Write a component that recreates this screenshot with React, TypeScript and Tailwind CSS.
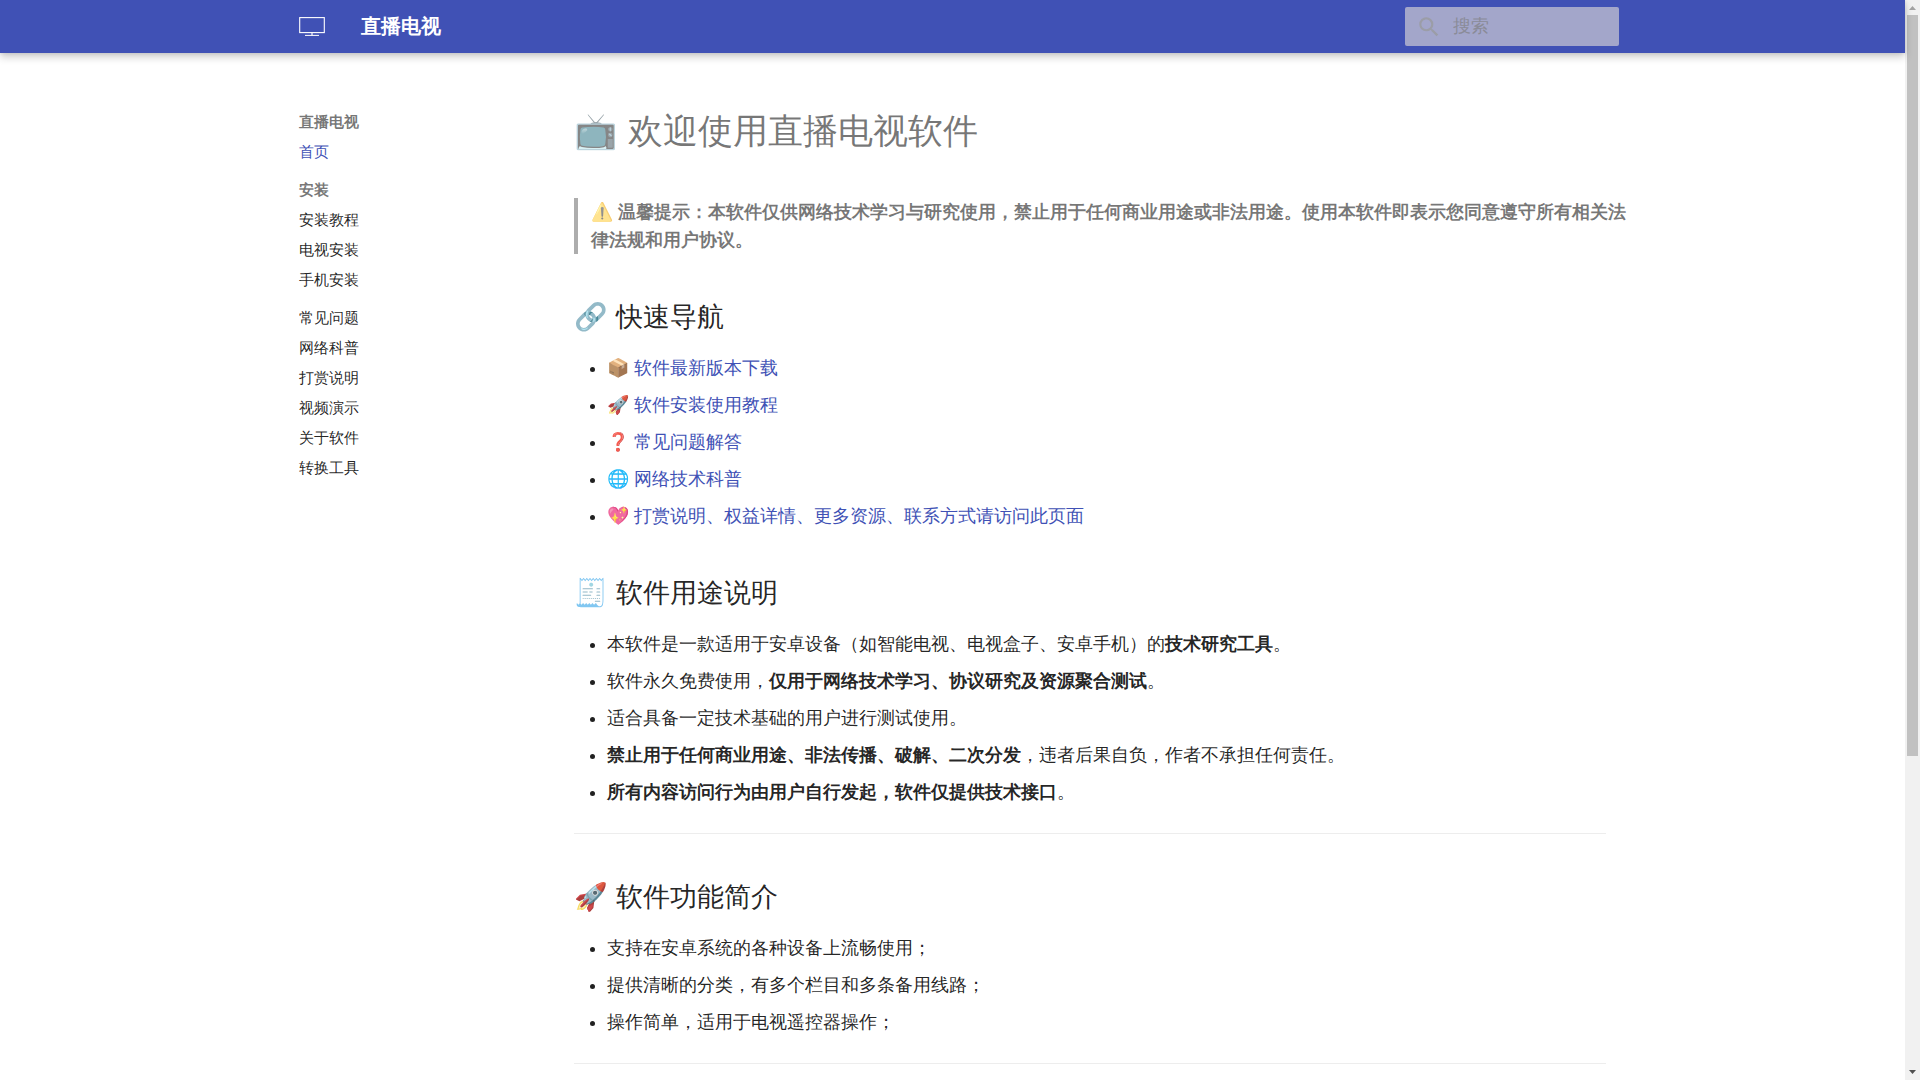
import type { ReactNode } from "react";

const navGroups = [
  {
    title: "直播电视",
    links: [{ label: "首页", active: true }],
  },
  {
    title: "安装",
    links: [{ label: "安装教程" }, { label: "电视安装" }, { label: "手机安装" }],
  },
  {
    links: [
      { label: "常见问题" },
      { label: "网络科普" },
      { label: "打赏说明" },
      { label: "视频演示" },
      { label: "关于软件" },
      { label: "转换工具" },
    ],
  },
] as { title?: string; links: { label: string; active?: boolean }[] }[];

const quickLinks = [
  { icon: "📦", label: "软件最新版本下载" },
  { icon: "🚀", label: "软件安装使用教程" },
  { icon: "❓", label: "常见问题解答" },
  { icon: "🌐", label: "网络技术科普" },
  { icon: "💖", label: "打赏说明、权益详情、更多资源、联系方式请访问此页面" },
];

function Header() {
  return (
    <header className="sticky top-0 z-10 bg-[#4051b5] text-white shadow-[0_0_4px_#0000001a,0_4px_8px_#00000033]">
      <div className="mx-auto flex h-[53px] max-w-[1343px] items-center pl-[18px] pr-[5px]">
        <a href="#" aria-label="直播电视">
          <svg viewBox="0 0 26 26" className="size-[26px]" fill="none" stroke="currentColor">
            <rect x="0.7" y="3.6" width="24.6" height="15" strokeWidth="1.1" />
            <path d="M13 19v2.2" strokeWidth="1.2" />
            <path d="M6 21.4h14" strokeWidth="1" />
          </svg>
        </a>
        <span className="ml-9 pb-0.5 text-[20px] font-bold leading-[28px]">直播电视</span>
        <form className="ml-auto flex h-[39px] w-[214px] items-center rounded-xs bg-[#a3a6ca] pl-[11px]">
          <label htmlFor="search">
            <svg viewBox="0 0 24 24" className="size-[26px]" fill="#9b9da7">
              <path d="M9.5 3A6.5 6.5 0 0 1 16 9.5c0 1.61-.59 3.09-1.56 4.23l.27.27h.79l5 5-1.5 1.5-5-5v-.79l-.27-.27A6.516 6.516 0 0 1 9.5 16 6.5 6.5 0 0 1 3 9.5 6.5 6.5 0 0 1 9.5 3m0 2C7 5 5 7 5 9.5S7 14 9.5 14 14 12 14 9.5 12 5 9.5 5Z" />
            </svg>
          </label>
          <input
            id="search"
            type="text"
            placeholder="搜索"
            aria-label="搜索"
            className="ml-[11px] w-full min-w-0 bg-transparent text-[18px] text-[#000000de] outline-none placeholder:text-[#8a8b98]"
          />
        </form>
      </div>
    </header>
  );
}

function SideNav() {
  return (
    <nav className="flex w-[266px] shrink-0 flex-col gap-[18px] pl-[18px] pt-[59px] text-[15px] leading-[20px]">
      {navGroups.map((group, i) => (
        <div key={i}>
          {group.title && <p className="mb-[10px] font-bold text-[#0000008a]">{group.title}</p>}
          <ul className="flex flex-col gap-[10px]">
            {group.links.map((link) => (
              <li key={link.label}>
                <a href="#" className={link.active ? "text-[#4051b5]" : ""}>
                  {link.label}
                </a>
              </li>
            ))}
          </ul>
        </div>
      ))}
    </nav>
  );
}

function Heading({ children }: { children: ReactNode }) {
  return <h2 className="mb-[18px] mt-[44px] text-[27px] font-light leading-[38px]">{children}</h2>;
}

function List({ children }: { children: ReactNode }) {
  return <ul className="ml-[33px] flex list-disc flex-col gap-[9px]">{children}</ul>;
}

function ScrollBar() {
  return (
    <div className="sticky top-0 flex h-screen w-[15px] shrink-0 flex-col items-center bg-[#f1f1f1]">
      <svg viewBox="0 0 15 15" className="size-[15px] shrink-0" fill="#a3a3a3">
        <path d="M4 10h7L7.500 6z" />
      </svg>
      <div className="h-[741px] w-[11px] bg-[#c1c1c1]" />
      <svg viewBox="0 0 15 15" className="mt-auto size-[15px] shrink-0" fill="#505050">
        <path d="M4 5h7L7.500 9z" />
      </svg>
    </div>
  );
}

function App() {
  return (
    <div
      lang="zh"
      className="flex min-h-screen bg-white font-['Liberation_Sans',sans-serif] text-[#000000de]"
    >
      <div className="min-w-0 flex-1">
        <Header />
        <div className="mx-auto flex max-w-[1343px]">
          <SideNav />
          <main className="ml-[27px] mr-[18px] min-w-0 flex-1 pt-[55px] text-[18px] leading-[28px]">
            <h1 className="mb-[44px] text-[35px] font-light leading-[46px] text-[#0000008a]">
              📺 欢迎使用直播电视软件
            </h1>
            <blockquote className="-mr-6 border-l-4 border-[#00000052] pl-[13px] text-[#0000008a]">
              <strong>
                ⚠️ 温馨提示：本软件仅供网络技术学习与研究使用，禁止用于任何商业用途或非法用途。使用本软件即表示您同意遵守所有相关法律法规和用户协议。
              </strong>
            </blockquote>

            <Heading>🔗 快速导航</Heading>
            <List>
              {quickLinks.map((link) => (
                <li key={link.label}>
                  {link.icon}{" "}
                  <a href="#" className="text-[#4051b5]">
                    {link.label}
                  </a>
                </li>
              ))}
            </List>

            <Heading>🧾 软件用途说明</Heading>
            <List>
              <li>
                本软件是一款适用于安卓设备（如智能电视、电视盒子、安卓手机）的<strong>技术研究工具</strong>。
              </li>
              <li>
                软件永久免费使用，<strong>仅用于网络技术学习、协议研究及资源聚合测试</strong>。
              </li>
              <li>适合具备一定技术基础的用户进行测试使用。</li>
              <li>
                <strong>禁止用于任何商业用途、非法传播、破解、二次分发</strong>，违者后果自负，作者不承担任何责任。
              </li>
              <li>
                <strong>所有内容访问行为由用户自行发起，软件仅提供技术接口</strong>。
              </li>
            </List>
            <hr className="mt-[27px] border-[#00000012]" />

            <Heading>🚀 软件功能简介</Heading>
            <List>
              <li>支持在安卓系统的各种设备上流畅使用；</li>
              <li>提供清晰的分类，有多个栏目和多条备用线路；</li>
              <li>操作简单，适用于电视遥控器操作；</li>
            </List>
            <hr className="mt-[27px] border-[#00000012]" />
          </main>
        </div>
      </div>
      <ScrollBar />
    </div>
  );
}

export default App;
